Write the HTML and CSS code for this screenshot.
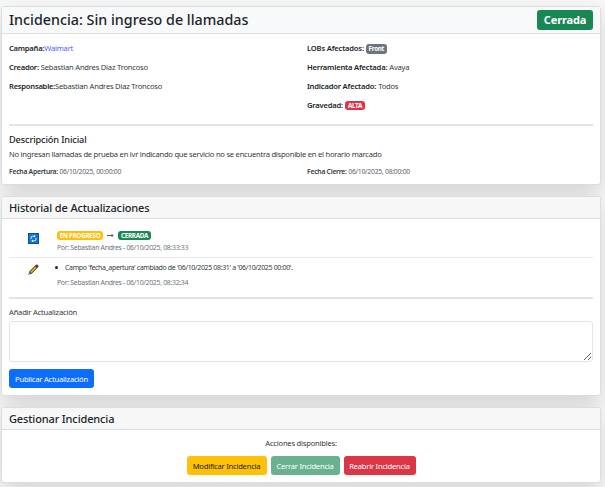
FILE: index.html
```html
<!DOCTYPE html>
<html lang="es">
<head>
<meta charset="utf-8">
<title>Incidencia</title>
<link rel="stylesheet" href="styles.css">
</head>
<body>
<main class="page">
  <section class="card detail">
    <header class="card-header main-header">
      <h1>Incidencia: Sin ingreso de llamadas</h1>
      <span class="status">Cerrada</span>
    </header>
    <div class="card-body">
      <div class="columns facts">
        <div>
          <p><b class="w1">Campaña:</b><a class="link">Walmart</a></p>
          <p><b>Creador:</b> Sebastian Andres Diaz Troncoso</p>
          <p><b class="w1">Responsable:</b>Sebastian Andres Diaz Troncoso</p>
        </div>
        <div class="impact">
          <p><b>LOBs Afectados:</b> <span class="badge gray">Front</span></p>
          <p><b>Herramienta Afectada:</b> Avaya</p>
          <p><b>Indicador Afectado:</b> Todos</p>
          <p><b>Gravedad:</b> <span class="badge red">ALTA</span></p>
        </div>
      </div>
      <hr>
      <h3>Descripción Inicial</h3>
      <p class="description">No ingresan llamadas de prueba en ivr indicando que servicio no se encuentra disponible en el horario marcado</p>
      <div class="columns dates">
        <div><b>Fecha Apertura:</b> 06/10/2025, 00:00:00</div>
        <div><b>Fecha Cierre:</b> 06/10/2025, 08:00:00</div>
      </div>
    </div>
  </section>

  <section class="card history">
    <header class="card-header"><h2>Historial de Actualizaciones</h2></header>
    <div class="card-body">
      <div class="entry first">
        <svg class="icon" viewBox="0 0 11 11"><rect width="11" height="11" fill="#174c80"/><rect x="1" y="1" width="9" height="9" fill="#0878dc"/><path d="M3.1 6V4.4Q3.1 3.2 4.3 3.2H6M7.9 5v1.6Q7.9 7.8 6.7 7.8H5" fill="none" stroke="#e6f5ff" stroke-width="1"/><path d="M6 1.8 7.7 3.2 6 4.6zM5 6.4 3.3 7.8 5 9.2z" fill="#e6f5ff"/></svg>
        <div>
          <div class="change"><span class="badge yellow">EN PROGRESO</span><svg class="arrow" viewBox="0 0 7 5"><path d="M0 2.5h6M4.5 1 6 2.5 4.5 4" fill="none" stroke="#333" stroke-width=".8"/></svg><span class="badge green">CERRADA</span></div>
          <div class="author">Por: Sebastian Andres - 06/10/2025, 08:33:33</div>
        </div>
      </div>
      <div class="entry second">
        <svg class="icon" viewBox="0 0 11 11"><path d="M.3 10.7 1.3 7.4 8 .7Q8.8 0 9.8 1L10.2 1.4Q11 2.2 10.3 3L3.6 9.7z" fill="#333"/><path d="M2 7.9 7.3 2.6 8.5 3.8 3.2 9.1z" fill="#f5b81c"/><path d="M7.9 2 8.7 1.2 9.8 2.3 9 3.1z" fill="#c43b50"/><path d="M1.4 8.5 2.5 9.6 1.2 9.9z" fill="#f0d0a0"/></svg>
        <div>
          <ul><li>Campo 'fecha_apertura' cambiado de '06/10/2025 08:31' a '06/10/2025 00:00'.</li></ul>
          <div class="author">Por: Sebastian Andres - 06/10/2025, 08:32:34</div>
        </div>
      </div>
      <hr>
      <label for="update">Añadir Actualización</label>
      <textarea id="update"></textarea>
      <button class="btn primary">Publicar Actualización</button>
    </div>
  </section>

  <section class="card manage">
    <header class="card-header"><h2>Gestionar Incidencia</h2></header>
    <div class="card-body">
      <p class="available">Acciones disponibles:</p>
      <div class="actions">
        <button class="btn modify">Modificar Incidencia</button>
        <button class="btn close">Cerrar Incidencia</button>
        <button class="btn reopen">Reabrir Incidencia</button>
      </div>
    </div>
  </section>
</main>
</body>
</html>
```
FILE: styles.css
```css
* { box-sizing: border-box; }
html { background: #f8f8f8; }
body {
  margin: 0;
  height: 487px;
  overflow: hidden;
  font: 7.6px/19px "Noto Sans", "Open Sans", sans-serif;
  letter-spacing: -.22px;
  color: #343a40;
}
h1, h2, h3, p, ul { margin: 0; }
b { font-weight: 600; color: #212529; }
.page { display: flex; flex-direction: column; gap: 11px; width: 601px; padding: 6px 0 0 1px; }
.card {
  border: 1px solid #dcdddd;
  border-radius: 3px;
  background: #fff;
  box-shadow: 0 8px 22px rgba(0, 0, 0, .15);
}
.detail { height: 179px; }
.history { height: 200px; }
.manage { height: 76px; }
.card-header {
  display: flex;
  align-items: center;
  justify-content: space-between;
  height: 22px;
  padding: 0 7px;
  border-bottom: 1px solid #dcdddd;
  border-radius: 2px 2px 0 0;
  background: #f7f7f7;
}
.main-header { height: 27px; background: #f8f9fb; }
.card-body { padding: 0 7px; }
h1 { font-size: 14.3px; line-height: 20px; font-weight: 500; letter-spacing: 0; color: #212529; }
h2 { font-size: 11px; line-height: 16px; font-weight: 500; letter-spacing: -.14px; color: #212529; }
h3 { height: 17px; margin-top: 5px; font-size: 9.2px; line-height: 17px; font-weight: 500; letter-spacing: -.13px; color: #212529; }
.status {
  width: 56px;
  height: 20px;
  border-radius: 3px;
  background: #198754;
  color: #fff;
  font-size: 11px;
  font-weight: 700;
  line-height: 20px;
  text-align: center;
  letter-spacing: -.15px;
}
.columns { display: grid; grid-template-columns: 298px 1fr; }
.facts { height: 90px; padding-top: 5px; }
.facts p { display: flex; align-items: center; gap: 2px; height: 19px; }
.facts b { letter-spacing: -.24px; }
.facts .impact b { letter-spacing: -.19px; }
.facts .w1 { margin-right: -2px; }
.link { color: #5a5aff; }
.badge {
  display: inline-flex;
  align-items: center;
  justify-content: center;
  height: 9px;
  border-radius: 3px;
  color: #fff;
  font-size: 6.3px;
  font-weight: 700;
  line-height: 9px;
  letter-spacing: -.3px;
}
.gray { width: 21px; height: 10px; background: #6c757d; }
.red { width: 20px; background: #dc3545; }
.yellow { width: 46px; background: #ffc107; }
.green { width: 33px; background: #198754; }
hr { height: 2px; margin: 0; border: 0; background: #e4e4e4; }
.description { height: 17px; line-height: 12px; letter-spacing: -.245px; }
.dates { font-size: 6.8px; line-height: 14px; color: #5c636a; letter-spacing: -.25px; }
.dates b { color: #343a40; }
.entry { display: grid; grid-template-columns: 48px 1fr; }
.first { height: 39px; padding-top: 12px; border-bottom: 1px solid #e8e8e8; }
.second { height: 39px; padding-top: 4px; }
.icon { width: 11px; height: 11px; margin: 2px 0 0 19px; }
.change { display: flex; align-items: center; height: 9px; }
.arrow { width: 7px; height: 5px; margin: 0 4px; }
.author { height: 13px; font-size: 6.9px; line-height: 15px; letter-spacing: -.3px; color: #6c757d; }
ul { height: 13px; padding-left: 8px; list-style: none; font-size: 7px; line-height: 11px; letter-spacing: -.35px; }
li { display: flex; align-items: center; }
li::before { content: ""; width: 3px; height: 3px; margin: 0 7px 0 -10px; border-radius: 50%; background: #212529; }
label { display: block; height: 22px; padding-top: 4px; }
textarea { display: block; width: 584px; height: 41px; border: 1px solid #e2e5e8; border-radius: 3px; background: #fff; }
.btn {
  height: 19px;
  padding: 0;
  border: 0;
  border-radius: 3px;
  color: #fff;
  font: 7.6px/20px "Noto Sans", "Open Sans", sans-serif;
  letter-spacing: -.22px;
  white-space: nowrap;
}
.primary { display: block; width: 85px; margin-top: 7px; background: #0d6efd; }
.available { height: 26px; padding-top: 4px; text-align: center; }
.actions { display: flex; justify-content: center; gap: 4px; }
.modify { width: 80px; background: #ffc107; color: #212529; }
.close { width: 69px; background: #69b18f; }
.reopen { width: 72px; background: #dc3545; }
```
